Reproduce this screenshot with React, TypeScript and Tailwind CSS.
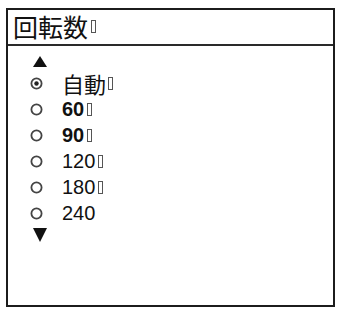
import React from "react";

const Tofu = ({ h = 13, ml = 4 }: { h?: number; ml?: number }) => (
  <span
    className="inline-block w-[5px] border border-[#555] align-middle"
    style={{ height: h, marginLeft: ml }}
  />
);

const Radio = ({ checked }: { checked?: boolean }) => (
  <svg width="13" height="13" viewBox="0 0 13 13" className="shrink-0">
    <circle cx="6.5" cy="6.5" r="5.1" fill="none" stroke="#444" strokeWidth="1.8" />
    {checked && <circle cx="6.5" cy="6.5" r="2.2" fill="#222" />}
  </svg>
);

const items: { label: string; bold?: boolean; tofu?: boolean; jp?: boolean; checked?: boolean }[] = [
  { label: "自動", jp: true, tofu: true, checked: true },
  { label: "60", bold: true, tofu: true },
  { label: "90", bold: true, tofu: true },
  { label: "120", tofu: true },
  { label: "180", tofu: true },
  { label: "240" },
];

export default function App() {
  return (
    <div className="w-[339px] h-[309px] bg-white pt-[8px] pl-[6px]">
      <div className="w-[329px] h-[299px] border-2 border-[#1c1c1c] flex flex-col">
        <div className="h-[36px] border-b-2 border-[#2a2a2a] pl-[5px] pt-[1px] flex items-start">
          <span
            className="text-[25px] leading-[30px] text-[#111] flex items-center"
            style={{ fontFamily: '"Noto Sans CJK JP", sans-serif' }}
          >
            回転数
            <Tofu h={13} ml={3} />
          </span>
        </div>
        <div className="flex flex-col pt-[10px] pl-[25px]">
          <svg width="14" height="11" viewBox="0 0 14 11">
            <polygon points="7,0 14,11 0,11" fill="#111" />
          </svg>
          <div className="mt-[3px] flex flex-col -ml-[3px]">
            {items.map((it) => (
              <div key={it.label} className="h-[26px] flex items-center">
                <Radio checked={it.checked} />
                <span
                  className={
                    "flex items-center text-[#111] " +
                    (it.jp
                      ? "ml-[19px] text-[22px] leading-[22px]"
                      : "ml-[19px] text-[20px] leading-[20px]") +
                    (it.bold ? " font-bold" : "")
                  }
                  style={{
                    fontFamily: it.jp
                      ? '"Noto Sans CJK JP", sans-serif'
                      : '"Liberation Sans", Arial, sans-serif',
                  }}
                >
                  {it.label}
                  {it.tofu && <Tofu h={13} ml={it.jp ? 2 : 3} />}
                </span>
              </div>
            ))}
          </div>
          <svg width="14" height="14" viewBox="0 0 14 14" className="mt-[2px]">
            <polygon points="0,0 14,0 7,14" fill="#111" />
          </svg>
        </div>
      </div>
    </div>
  );
}
